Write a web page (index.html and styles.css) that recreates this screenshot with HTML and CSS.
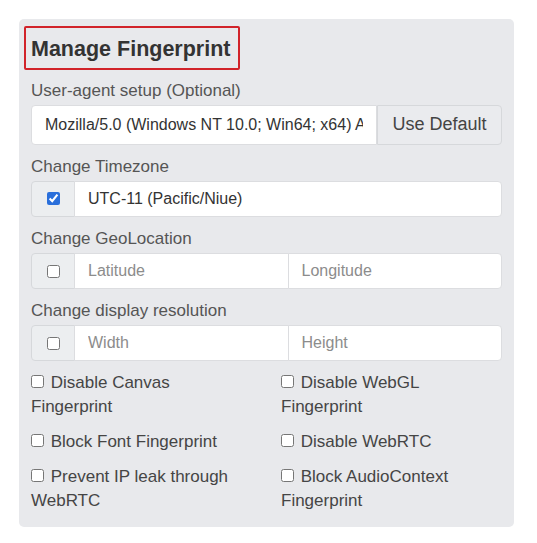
FILE: index.html
```
<!DOCTYPE html>
<html lang="en">
<head>
<meta charset="utf-8">
<title>Manage Fingerprint</title>
<link rel="stylesheet" href="styles.css">
</head>
<body>
<div class="panel">
  <h2 class="title">Manage Fingerprint</h2>

  <div class="field-label">User-agent setup (Optional)</div>
  <div class="group group-ua">
    <input class="control" type="text" value="Mozilla/5.0 (Windows NT 10.0; Win64; x64) AppleWebKit/537.36 (KHTML, like Gecko) Chrome/120.0 Safari/537.36">
    <button class="btn-default" type="button">Use Default</button>
  </div>

  <div class="field-label">Change Timezone</div>
  <div class="group">
    <span class="addon"><input type="checkbox" checked></span>
    <input class="control" type="text" value="UTC-11 (Pacific/Niue)">
  </div>

  <div class="field-label">Change GeoLocation</div>
  <div class="group">
    <span class="addon"><input type="checkbox"></span>
    <input class="control half" type="text" placeholder="Latitude">
    <input class="control half" type="text" placeholder="Longitude">
  </div>

  <div class="field-label">Change display resolution</div>
  <div class="group">
    <span class="addon"><input type="checkbox"></span>
    <input class="control half" type="text" placeholder="Width">
    <input class="control half" type="text" placeholder="Height">
  </div>

  <div class="options">
    <label class="option"><input type="checkbox"> Disable Canvas Fingerprint</label>
    <label class="option"><input type="checkbox"> Disable WebGL Fingerprint</label>
    <label class="option"><input type="checkbox"> Block Font Fingerprint</label>
    <label class="option"><input type="checkbox"> Disable WebRTC</label>
    <label class="option"><input type="checkbox"> Prevent IP leak through WebRTC</label>
    <label class="option"><input type="checkbox"> Block AudioContext Fingerprint</label>
  </div>
</div>
</body>
</html>
```

FILE: styles.css
```
* { box-sizing: border-box; }

body {
  margin: 0;
  background: #ffffff;
  font-family: "Liberation Sans", Arial, sans-serif;
  color: #555;
}

.panel {
  margin: 19px 0 0 19px;
  width: 495px;
  padding: 7px 12px 14px 12px;
  background: #e8e9ec;
  border-radius: 5px;
}

.title {
  width: fit-content;
  margin: 0 0 7.6px -7px;
  padding: 8px 8px 6px 5px;
  border: 2px solid #d1232a;
  border-radius: 2px;
  font-size: 21.5px;
  line-height: 26px;
  font-weight: bold;
  color: #333;
}

.field-label {
  font-size: 17px;
  line-height: 25px;
  color: #555;
  margin-bottom: 2.2px;
}

.group {
  display: flex;
  height: 36px;
  margin-bottom: 9px;
}

.group-ua { height: 40px; }

.control {
  flex: 1 1 auto;
  min-width: 0;
  height: 100%;
  margin: 0;
  padding: 0 13px;
  border: 1px solid #dcdde0;
  background: #fff;
  font-family: inherit;
  font-size: 16px;
  color: #333;
  outline: none;
}

.control::placeholder { color: #8c8c8c; }

.group > :first-child { border-radius: 4px 0 0 4px; }
.group > :last-child { border-radius: 0 4px 4px 0; }
.group > * + * { margin-left: -1px; }

.control.half { flex: 1 1 0; }

.btn-default {
  flex: 0 0 auto;
  width: 125px;
  height: 100%;
  margin: 0;
  padding: 0;
  border: 1px solid #d6d8db;
  background: #eaebee;
  font-family: inherit;
  font-size: 18px;
  color: #444;
}

.addon {
  flex: 0 0 44px;
  display: flex;
  align-items: center;
  justify-content: center;
  height: 100%;
  border: 1px solid #d6d8db;
  background: #eceef0;
}

.addon input {
  width: 13px;
  height: 13px;
  margin: 0;
  accent-color: #2a6fdb;
}

.options {
  display: grid;
  grid-template-columns: 1fr 1fr;
  column-gap: 29px;
  row-gap: 11px;
  margin-top: 9.5px;
  font-size: 17px;
  line-height: 24px;
  color: #454545;
}

.option input {
  width: 13px;
  height: 13px;
  margin: 0 2px 0 0;
}
```
